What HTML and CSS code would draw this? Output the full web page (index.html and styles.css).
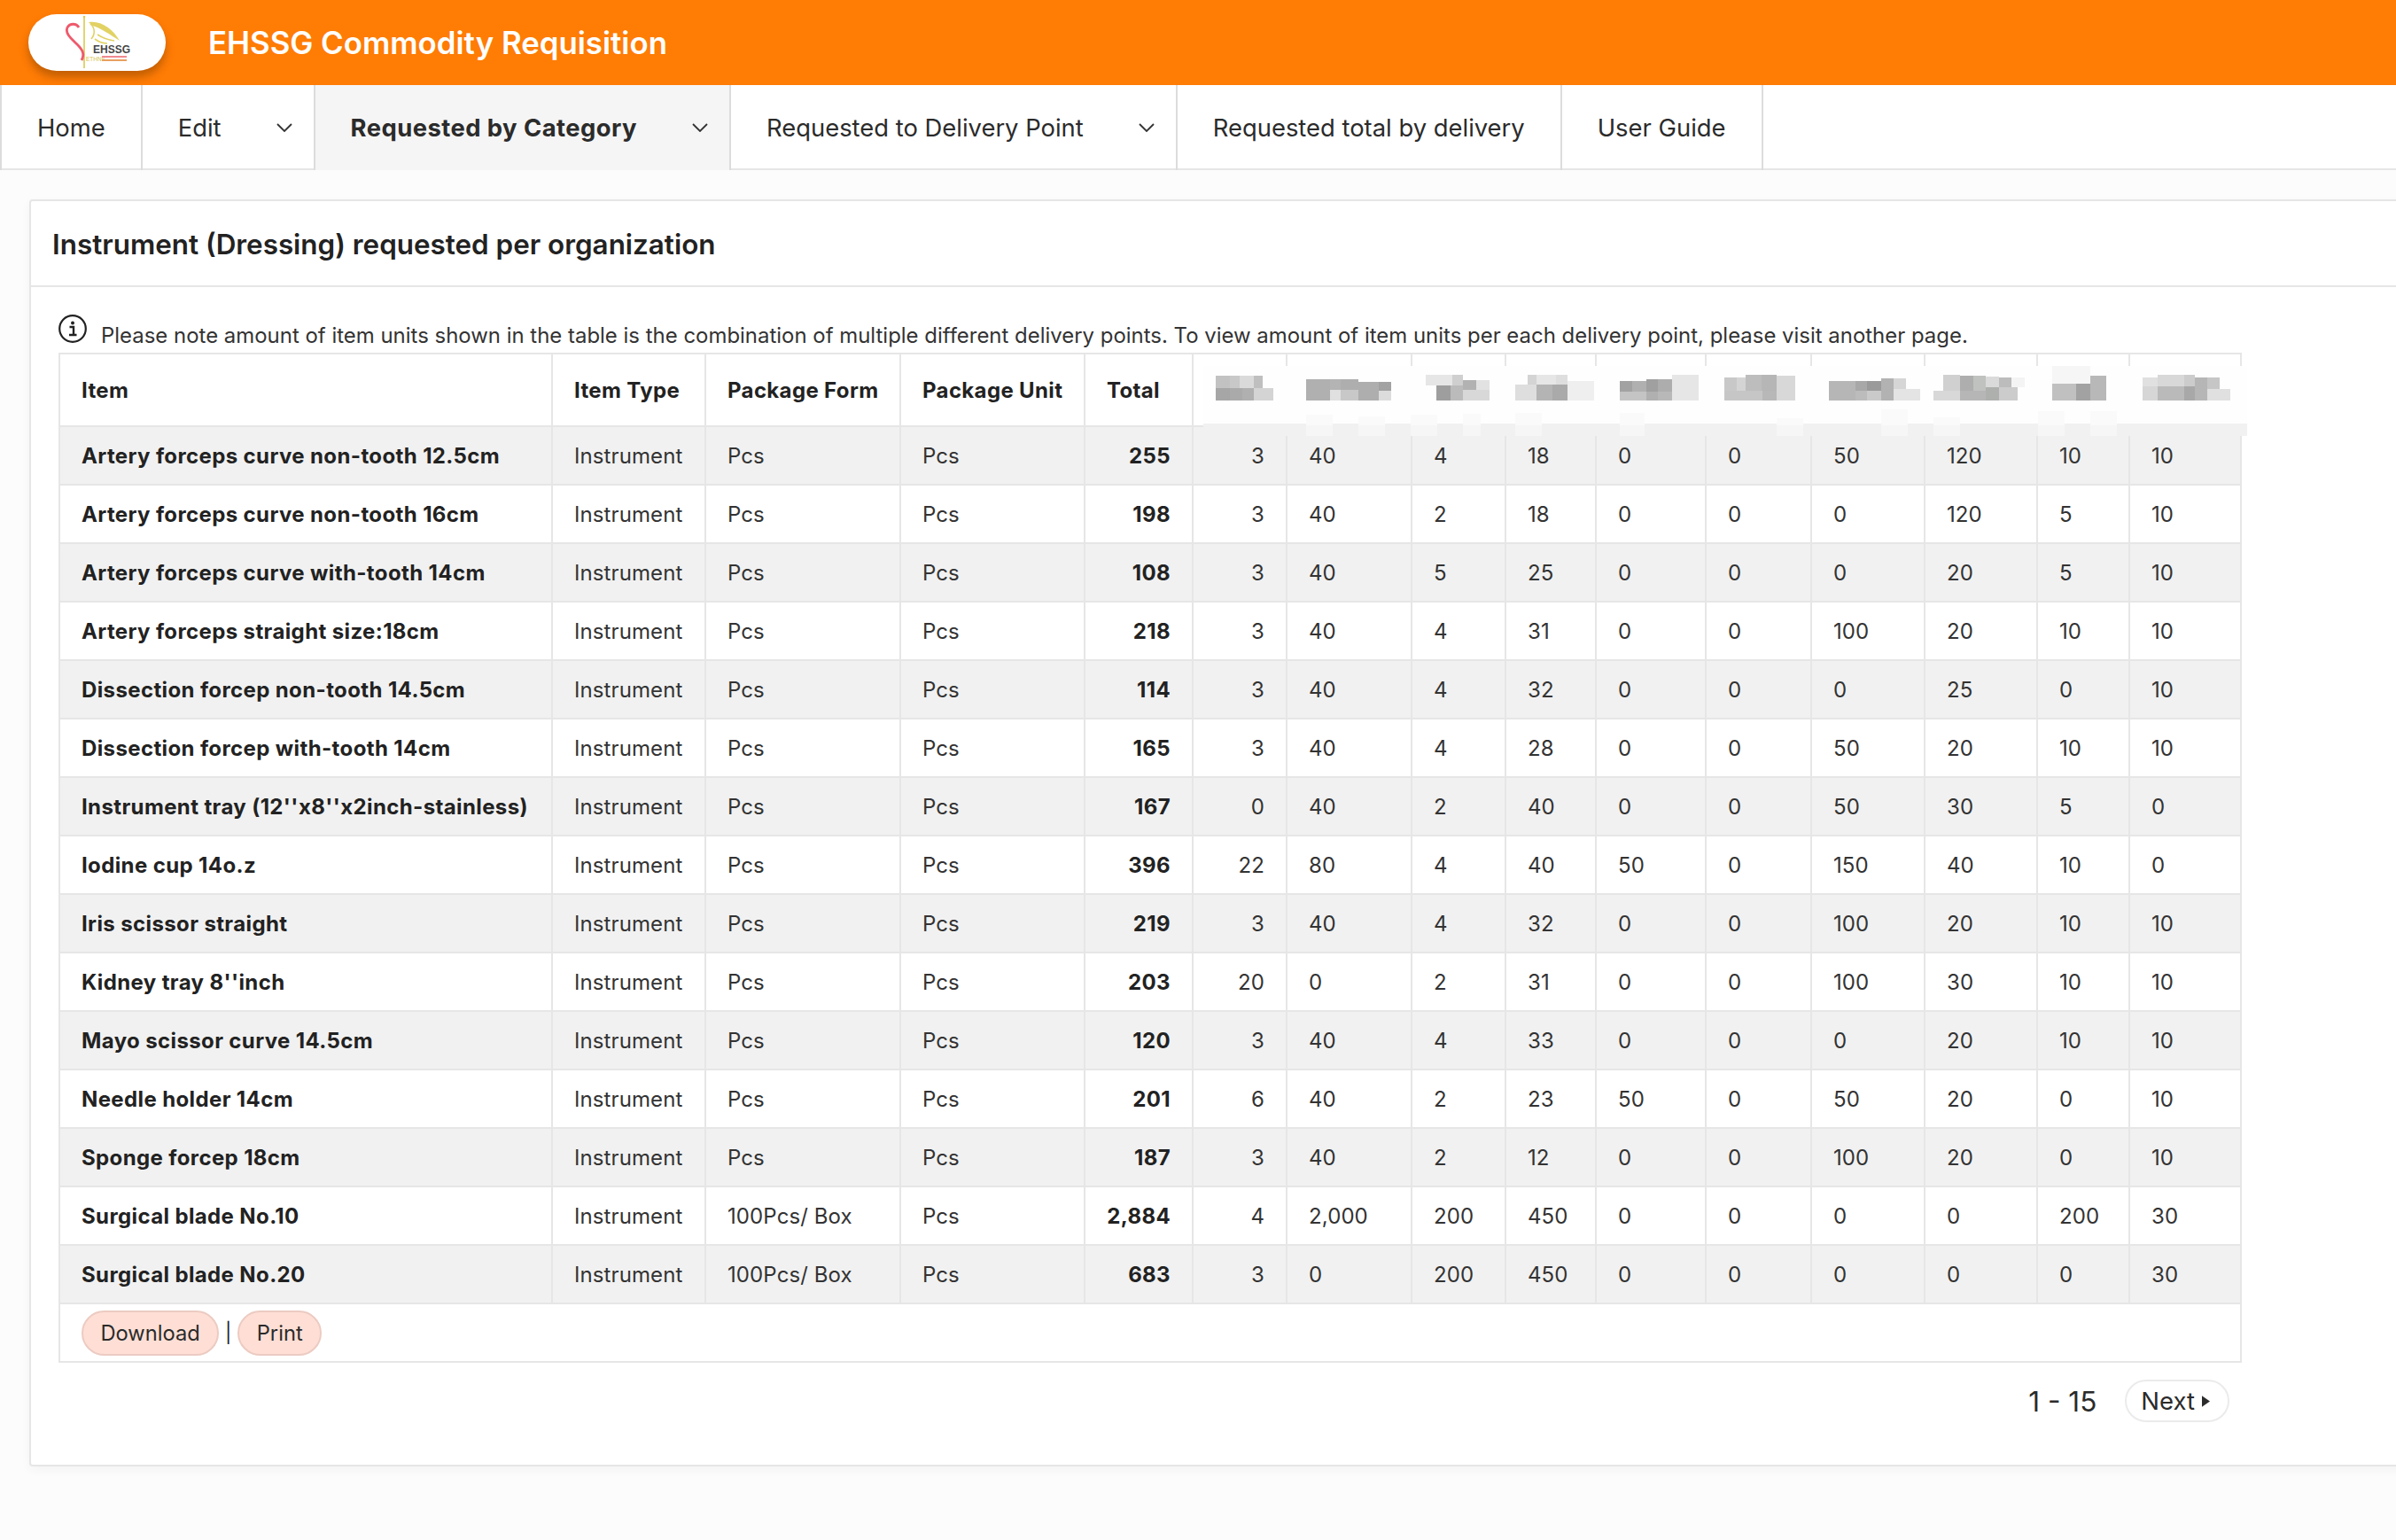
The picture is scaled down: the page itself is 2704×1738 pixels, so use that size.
FILE: index.html
```html
<!DOCTYPE html>
<html lang="en">
<head>
  <meta charset="UTF-8">
  <title>EHSSG Commodity Requisition</title>
  <link rel="stylesheet" href="styles.css">
</head>
<body>
  <header class="topbar">
    <div class="logo">
      <svg viewBox="0 0 155 64" width="155" height="64">
        <path d="M63 4V61" stroke="#dcc94e" stroke-width="1.6" fill="none"/>
        <circle cx="63" cy="3" r="1.3" fill="#dcc94e"/>
        <path d="M57 15C54 10 47 10 44 15C41 22 49 28 55 34C61 40 64 45 60 52" stroke="#ee5a6c" stroke-width="2.8" fill="none"/>
        <path d="M68 9C82 7 95 16 103 30C92 23 81 15 72 13Z" fill="#e2d264"/>
        <path d="M70 11C75 15 76 22 71 28M78 23C84 27 90 29 97 30M75 28C79 31 84 33 89 33" stroke="#e2d264" stroke-width="1.6" fill="none"/>
        <text x="73" y="44" class="logo-name">EHSSG</text>
        <text x="65" y="53" class="logo-sub">ETHNIC</text>
        <rect x="83" y="47" width="28" height="2" fill="#f08a90"/>
        <rect x="83" y="51" width="28" height="2" fill="#e8a060"/>
      </svg>
    </div>
    <h1 class="app-title">EHSSG Commodity Requisition</h1>
  </header>

  <nav class="tabs">
    <a class="tab tab-first">Home</a>
    <a class="tab">Edit<svg class="chev" viewBox="0 0 18 10"><path d="M1 1L9 9L17 1"/></svg></a>
    <a class="tab active">Requested by Category<svg class="chev" viewBox="0 0 18 10"><path d="M1 1L9 9L17 1"/></svg></a>
    <a class="tab">Requested to Delivery Point<svg class="chev" viewBox="0 0 18 10"><path d="M1 1L9 9L17 1"/></svg></a>
    <a class="tab">Requested total by delivery</a>
    <a class="tab">User Guide</a>
  </nav>

  <main class="card">
    <h2 class="card-head">Instrument (Dressing) requested per organization</h2>
    <div class="card-body">
      <p class="note">
        <svg class="info" viewBox="0 0 32 32" width="32" height="32">
          <circle cx="16" cy="16" r="14.8" fill="none" stroke="#222" stroke-width="2.2"/>
          <circle cx="16" cy="9.5" r="2" fill="#222"/>
          <path d="M12.5 14H17V22.5M12 23H20.5" fill="none" stroke="#222" stroke-width="2.4"/>
        </svg>
        <span>Please note amount of item units shown in the table is the combination of multiple different delivery points. To view amount of item units per each delivery point, please visit another page.</span>
      </p>

      <div class="table-wrap">
        <table class="data-table">
          <colgroup>
            <col><col><col><col><col><col><col><col><col><col><col><col><col><col><col>
          </colgroup>
          <thead>
            <tr>
              <th>Item</th><th>Item Type</th><th>Package Form</th><th>Package Unit</th><th>Total</th>
              <th></th><th></th><th></th><th></th><th></th><th></th><th></th><th></th><th></th><th></th>
            </tr>
          </thead>
          <tbody>
            <tr><td class="name">Artery forceps curve non-tooth 12.5cm</td><td>Instrument</td><td>Pcs</td><td>Pcs</td><td class="total">255</td><td class="num">3</td><td>40</td><td>4</td><td>18</td><td>0</td><td>0</td><td>50</td><td>120</td><td>10</td><td>10</td></tr>
            <tr><td class="name">Artery forceps curve non-tooth 16cm</td><td>Instrument</td><td>Pcs</td><td>Pcs</td><td class="total">198</td><td class="num">3</td><td>40</td><td>2</td><td>18</td><td>0</td><td>0</td><td>0</td><td>120</td><td>5</td><td>10</td></tr>
            <tr><td class="name">Artery forceps curve with-tooth 14cm</td><td>Instrument</td><td>Pcs</td><td>Pcs</td><td class="total">108</td><td class="num">3</td><td>40</td><td>5</td><td>25</td><td>0</td><td>0</td><td>0</td><td>20</td><td>5</td><td>10</td></tr>
            <tr><td class="name">Artery forceps straight size:18cm</td><td>Instrument</td><td>Pcs</td><td>Pcs</td><td class="total">218</td><td class="num">3</td><td>40</td><td>4</td><td>31</td><td>0</td><td>0</td><td>100</td><td>20</td><td>10</td><td>10</td></tr>
            <tr><td class="name">Dissection forcep non-tooth 14.5cm</td><td>Instrument</td><td>Pcs</td><td>Pcs</td><td class="total">114</td><td class="num">3</td><td>40</td><td>4</td><td>32</td><td>0</td><td>0</td><td>0</td><td>25</td><td>0</td><td>10</td></tr>
            <tr><td class="name">Dissection forcep with-tooth 14cm</td><td>Instrument</td><td>Pcs</td><td>Pcs</td><td class="total">165</td><td class="num">3</td><td>40</td><td>4</td><td>28</td><td>0</td><td>0</td><td>50</td><td>20</td><td>10</td><td>10</td></tr>
            <tr><td class="name">Instrument tray (12''x8''x2inch-stainless)</td><td>Instrument</td><td>Pcs</td><td>Pcs</td><td class="total">167</td><td class="num">0</td><td>40</td><td>2</td><td>40</td><td>0</td><td>0</td><td>50</td><td>30</td><td>5</td><td>0</td></tr>
            <tr><td class="name">Iodine cup 14o.z</td><td>Instrument</td><td>Pcs</td><td>Pcs</td><td class="total">396</td><td class="num">22</td><td>80</td><td>4</td><td>40</td><td>50</td><td>0</td><td>150</td><td>40</td><td>10</td><td>0</td></tr>
            <tr><td class="name">Iris scissor straight</td><td>Instrument</td><td>Pcs</td><td>Pcs</td><td class="total">219</td><td class="num">3</td><td>40</td><td>4</td><td>32</td><td>0</td><td>0</td><td>100</td><td>20</td><td>10</td><td>10</td></tr>
            <tr><td class="name">Kidney tray 8''inch</td><td>Instrument</td><td>Pcs</td><td>Pcs</td><td class="total">203</td><td class="num">20</td><td>0</td><td>2</td><td>31</td><td>0</td><td>0</td><td>100</td><td>30</td><td>10</td><td>10</td></tr>
            <tr><td class="name">Mayo scissor curve 14.5cm</td><td>Instrument</td><td>Pcs</td><td>Pcs</td><td class="total">120</td><td class="num">3</td><td>40</td><td>4</td><td>33</td><td>0</td><td>0</td><td>0</td><td>20</td><td>10</td><td>10</td></tr>
            <tr><td class="name">Needle holder 14cm</td><td>Instrument</td><td>Pcs</td><td>Pcs</td><td class="total">201</td><td class="num">6</td><td>40</td><td>2</td><td>23</td><td>50</td><td>0</td><td>50</td><td>20</td><td>0</td><td>10</td></tr>
            <tr><td class="name">Sponge forcep 18cm</td><td>Instrument</td><td>Pcs</td><td>Pcs</td><td class="total">187</td><td class="num">3</td><td>40</td><td>2</td><td>12</td><td>0</td><td>0</td><td>100</td><td>20</td><td>0</td><td>10</td></tr>
            <tr><td class="name">Surgical blade No.10</td><td>Instrument</td><td>100Pcs/ Box</td><td>Pcs</td><td class="total">2,884</td><td class="num">4</td><td>2,000</td><td>200</td><td>450</td><td>0</td><td>0</td><td>0</td><td>0</td><td>200</td><td>30</td></tr>
            <tr><td class="name">Surgical blade No.20</td><td>Instrument</td><td>100Pcs/ Box</td><td>Pcs</td><td class="total">683</td><td class="num">3</td><td>0</td><td>200</td><td>450</td><td>0</td><td>0</td><td>0</td><td>0</td><td>0</td><td>30</td></tr>
          </tbody>
          <tfoot>
            <tr>
              <td colspan="15">
                <div class="actions">
                  <button class="pill">Download</button>
                  <span class="sep">|</span>
                  <button class="pill">Print</button>
                </div>
              </td>
            </tr>
          </tfoot>
        </table>

        <!-- pixelated names over the organization columns -->
        <svg class="mosaic" viewBox="0 0 3630 330" width="1210" height="110" shape-rendering="crispEdges">
          <rect x="24" y="39" width="3534" height="201" fill="#fefefe"/>
          <rect x="24" y="235" width="3534" height="41" fill="#f1f1f1"/>
          <g fill="#fafafa">
            <rect x="372" y="204" width="90" height="36"/><rect x="549" y="210" width="90" height="30"/>
            <rect x="726" y="204" width="90" height="36"/><rect x="903" y="201" width="60" height="39"/>
            <rect x="1080" y="198" width="90" height="42"/><rect x="1434" y="198" width="84" height="42"/>
            <rect x="1965" y="216" width="90" height="24"/><rect x="2319" y="186" width="90" height="54"/>
            <rect x="2496" y="213" width="90" height="27"/><rect x="2850" y="192" width="90" height="48"/>
            <rect x="3027" y="192" width="90" height="48"/>
          </g>
          <g fill="#f6f6f6">
            <rect x="372" y="240" width="90" height="36"/><rect x="549" y="240" width="90" height="36"/>
            <rect x="726" y="240" width="90" height="36"/><rect x="903" y="240" width="60" height="36"/>
            <rect x="1080" y="240" width="90" height="36"/><rect x="1434" y="240" width="84" height="36"/>
            <rect x="1965" y="240" width="90" height="36"/><rect x="2319" y="240" width="90" height="36"/>
            <rect x="2496" y="240" width="90" height="36"/><rect x="2850" y="240" width="90" height="36"/>
            <rect x="3027" y="240" width="90" height="36"/>
          </g>

          <rect x="66" y="72" width="48" height="42" fill="#c2c2c2"/><rect x="114" y="72" width="33" height="42" fill="#c8c8c8"/>
          <rect x="147" y="72" width="48" height="42" fill="#dadada"/><rect x="195" y="72" width="30" height="42" fill="#bfbfbf"/>
          <rect x="66" y="114" width="48" height="42" fill="#a6a6a6"/><rect x="114" y="114" width="42" height="42" fill="#aaaaaa"/>
          <rect x="156" y="114" width="39" height="42" fill="#b0b0b0"/><rect x="195" y="114" width="66" height="42" fill="#d4d4d4"/>

          <rect x="372" y="84" width="81" height="72" fill="#b0b0b0"/><rect x="453" y="84" width="36" height="36" fill="#b4b4b4"/>
          <rect x="489" y="84" width="60" height="36" fill="#aeaeae"/><rect x="549" y="93" width="69" height="63" fill="#aeaeae"/>
          <rect x="618" y="93" width="42" height="30" fill="#a2a2a2"/><rect x="453" y="120" width="36" height="36" fill="#e0e0e0"/>
          <rect x="489" y="120" width="60" height="36" fill="#c8c8c8"/><rect x="618" y="123" width="42" height="33" fill="#dcdcdc"/>

          <rect x="777" y="69" width="90" height="36" fill="#e6e6e6"/><rect x="867" y="69" width="36" height="36" fill="#cfcfcf"/>
          <rect x="903" y="87" width="45" height="33" fill="#b2b2b2"/><rect x="948" y="87" width="45" height="33" fill="#e2e2e2"/>
          <rect x="813" y="105" width="48" height="51" fill="#9e9e9e"/><rect x="861" y="105" width="42" height="51" fill="#bbbbbb"/>
          <rect x="903" y="120" width="90" height="36" fill="#d8d8d8"/>

          <rect x="1122" y="69" width="30" height="33" fill="#d4d4d4"/><rect x="1152" y="69" width="66" height="33" fill="#e6e6e6"/>
          <rect x="1218" y="69" width="39" height="33" fill="#dedede"/><rect x="1080" y="102" width="72" height="54" fill="#dedede"/>
          <rect x="1152" y="102" width="54" height="54" fill="#b4b4b4"/><rect x="1206" y="102" width="51" height="54" fill="#aaaaaa"/>
          <rect x="1257" y="90" width="90" height="66" fill="#efefef"/>

          <rect x="1434" y="90" width="42" height="36" fill="#a2a2a2"/><rect x="1476" y="90" width="48" height="36" fill="#b0b0b0"/>
          <rect x="1524" y="84" width="39" height="42" fill="#a0a0a0"/><rect x="1563" y="84" width="48" height="42" fill="#adadad"/>
          <rect x="1434" y="126" width="90" height="30" fill="#c4c4c4"/><rect x="1524" y="126" width="39" height="30" fill="#b0b0b0"/>
          <rect x="1563" y="126" width="48" height="30" fill="#b8b8b8"/><rect x="1611" y="69" width="90" height="87" fill="#e6e6e6"/>

          <g transform="translate(1530 0)">
            <rect x="258" y="78" width="42" height="45" fill="#c8c8c8"/><rect x="300" y="78" width="30" height="45" fill="#d4d4d4"/>
            <rect x="330" y="69" width="54" height="54" fill="#bdbdbd"/><rect x="384" y="69" width="51" height="54" fill="#b6b6b6"/>
            <rect x="435" y="72" width="63" height="84" fill="#d8d8d8"/><rect x="258" y="123" width="129" height="33" fill="#c6c6c6"/>
            <rect x="387" y="123" width="48" height="33" fill="#b8b8b8"/>

            <rect x="612" y="90" width="90" height="66" fill="#b6b6b6"/><rect x="702" y="90" width="39" height="33" fill="#a8a8a8"/>
            <rect x="741" y="90" width="48" height="33" fill="#9a9a9a"/><rect x="789" y="81" width="42" height="75" fill="#b2b2b2"/>
            <rect x="831" y="81" width="42" height="36" fill="#d6d6d6"/><rect x="831" y="117" width="90" height="39" fill="#e4e4e4"/>
            <rect x="702" y="123" width="39" height="33" fill="#bcbcbc"/><rect x="741" y="123" width="48" height="33" fill="#cacaca"/>

            <rect x="999" y="69" width="57" height="54" fill="#d0d0d0"/><rect x="966" y="123" width="90" height="33" fill="#d8d8d8"/>
            <rect x="1056" y="72" width="45" height="51" fill="#aeaeae"/><rect x="1101" y="72" width="42" height="51" fill="#c0c2c0"/>
            <rect x="1143" y="75" width="45" height="36" fill="#dadada"/><rect x="1188" y="78" width="42" height="33" fill="#bcbcbc"/>
            <rect x="1230" y="78" width="45" height="33" fill="#f4f4f4"/><rect x="1056" y="123" width="87" height="33" fill="#b6b6b6"/>
            <rect x="1143" y="111" width="45" height="45" fill="#aeb0ae"/><rect x="1188" y="111" width="63" height="45" fill="#cccccc"/>

            <rect x="1368" y="39" width="129" height="60" fill="#f6f6f6"/><rect x="1368" y="99" width="81" height="57" fill="#c0c0c0"/>
            <rect x="1449" y="99" width="48" height="57" fill="#a2a2a2"/><rect x="1497" y="72" width="54" height="84" fill="#b8b8b8"/>
          </g>

          <g transform="translate(2850 0)">
            <rect x="354" y="78" width="51" height="30" fill="#e0e0e0"/><rect x="405" y="69" width="90" height="39" fill="#d8d8d8"/>
            <rect x="495" y="69" width="36" height="39" fill="#cccccc"/><rect x="531" y="78" width="42" height="78" fill="#b6b6b6"/>
            <rect x="573" y="78" width="42" height="39" fill="#c6c6c6"/><rect x="354" y="108" width="51" height="48" fill="#d6d6d6"/>
            <rect x="405" y="108" width="90" height="48" fill="#bababa"/><rect x="495" y="108" width="36" height="48" fill="#a8a8a8"/>
            <rect x="573" y="117" width="78" height="39" fill="#e0e0e0"/>
          </g>
        </svg>
      </div>

      <div class="pager">
        <span class="range">1 - 15</span>
        <button class="next">Next<svg class="caret" viewBox="0 0 10 14" width="9" height="13"><path d="M0 0L10 7L0 14Z"/></svg></button>
      </div>
    </div>
  </main>
</body>
</html>
```

FILE: styles.css
```css
* {
  box-sizing: border-box;
}
html, body {
  margin: 0;
  height: 100%;
}
body {
  font-family: Inter, "Liberation Sans", sans-serif;
  color: #262626;
  background-color: #fcfcfc;
  overflow: hidden;
}

/* top bar */
.topbar {
  display: flex;
  align-items: center;
  height: 96px;
  padding-left: 32px;
  background-color: #ff7c05;
}
.logo {
  width: 155px;
  height: 64px;
  margin-top: -1px;
  border-radius: 32px;
  background-color: white;
  box-shadow: 0 7px 10px rgba(120,60,0,0.45);
}
.logo svg {
  display: block;
  overflow: visible;
}
.logo-name {
  font: bold 12px "Liberation Sans", sans-serif;
  fill: #454545;
}
.logo-sub {
  font: 6.5px "Liberation Sans", sans-serif;
  fill: #d4c04a;
}
.app-title {
  margin: 0 0 0 48px;
  font-size: 34.8px;
  font-weight: 600;
  color: white;
}

/* tabs */
.tabs {
  display: flex;
  height: 96px;
  background-color: white;
  border-bottom: 2px solid #e6e6e6;
}
.tab {
  display: flex;
  align-items: center;
  height: 96px;
  padding: 0 40px;
  font-size: 27.4px;
  color: #2b2b2b;
  border-right: 2px solid #dcdcdc;
  white-space: nowrap;
}
.tab-first {
  border-left: 2px solid #dcdcdc;
}
.tab.active {
  font-weight: 700;
  letter-spacing: 0.45px;
  background-color: #f5f5f5;
}
.chev {
  width: 18px;
  height: 10px;
  margin-left: 62px;
  margin-right: -16px;
  fill: none;
  stroke: #333;
  stroke-width: 1.8;
}

/* card */
.card {
  height: 1430px;
  margin: 33px -20px 0 33px;
  background-color: white;
  border: 2px solid #e6e6e6;
  border-radius: 4px;
  box-shadow: 0 4px 12px rgba(0,0,0,0.04);
}
.card-head {
  display: flex;
  align-items: center;
  height: 97px;
  margin: 0;
  padding: 2px 0 0 24px;
  font-size: 31.4px;
  font-weight: 600;
  color: #222;
  border-bottom: 2px solid #e6e6e6;
}
.card-body {
  padding-left: 31px;
}
.note {
  display: flex;
  align-items: flex-end;
  height: 74px;
  margin: 0;
  font-size: 23.94px;
  color: #333;
}
.note span {
  margin: 0 0 1px 16px;
  line-height: 36px;
}
.info {
  flex: none;
  margin-bottom: 11px;
}

/* table */
.table-wrap {
  position: relative;
  width: 2464px;
}
.data-table {
  width: 2462px;
  table-layout: fixed;
  border-collapse: collapse;
  font-size: 24px;
  letter-spacing: 0.1px;
}
.data-table col:nth-child(1) { width: 556px; }
.data-table col:nth-child(2) { width: 173px; }
.data-table col:nth-child(3) { width: 220px; }
.data-table col:nth-child(4) { width: 208px; }
.data-table col:nth-child(5) { width: 122px; }
.data-table col:nth-child(6) { width: 106px; }
.data-table col:nth-child(7) { width: 141px; }
.data-table col:nth-child(8) { width: 106px; }
.data-table col:nth-child(9) { width: 102px; }
.data-table col:nth-child(10) { width: 124px; }
.data-table col:nth-child(11) { width: 119px; }
.data-table col:nth-child(12) { width: 128px; }
.data-table col:nth-child(13) { width: 127px; }
.data-table col:nth-child(14) { width: 104px; }
.data-table col:nth-child(15) { width: 126px; }
.data-table th,
.data-table td {
  padding: 0 24px;
  border: 2px solid #e6e6e6;
  text-align: left;
  white-space: nowrap;
}
.data-table th {
  height: 82px;
  font-weight: 700;
  letter-spacing: 0.35px;
  color: #222;
}
.data-table tbody td {
  height: 66px;
  color: #333;
}
.data-table tbody tr:nth-child(odd) {
  background-color: #f1f1f1;
}
.data-table td.name,
.data-table td.total {
  font-weight: 700;
  letter-spacing: 0.38px;
  color: #222;
}
.data-table td.total,
.data-table td.num {
  text-align: right;
}
.data-table tfoot td {
  height: 66px;
}
.actions {
  display: flex;
  align-items: center;
}
.pill {
  height: 51px;
  padding: 0 19.5px;
  font: 23.7px Inter, "Liberation Sans", sans-serif;
  color: #2b2b2b;
  background-color: #ffdfd5;
  border: 2px solid #eccbc2;
  border-radius: 26px;
}
.sep {
  width: 21px;
  text-align: center;
  font-size: 22px;
}
.mosaic {
  position: absolute;
  left: 1284px;
  top: 2px;
}

/* pager */
.pager {
  display: flex;
  justify-content: flex-end;
  align-items: center;
  width: 2450px;
  margin-top: 19px;
}
.range {
  font-size: 31.5px;
  color: #2b2b2b;
  margin-right: 32px;
}
.next {
  display: flex;
  align-items: center;
  height: 48px;
  padding: 0 20px 0 16px;
  font: 27.5px Inter, "Liberation Sans", sans-serif;
  color: #2b2b2b;
  background-color: white;
  border: 2px solid #ebebeb;
  border-radius: 24px;
}
.caret {
  margin-left: 8px;
  fill: #2b2b2b;
}
```
